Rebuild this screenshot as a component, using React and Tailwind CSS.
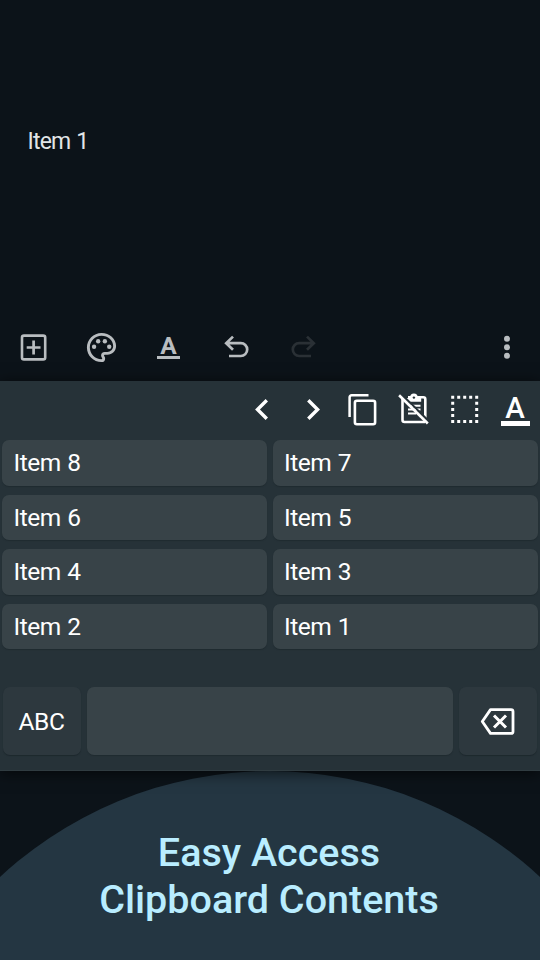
import React from "react";

const clips = ["Item 8", "Item 7", "Item 6", "Item 5", "Item 4", "Item 3", "Item 2", "Item 1"];

function Icon({ w, h, className = "", children }) {
  return (
    <svg width={w} height={h} viewBox={`0 0 ${w} ${h}`} fill="none" stroke="currentColor" className={`shrink-0 ${className}`}>
      {children}
    </svg>
  );
}

function EditorToolbar() {
  return (
    <div className="flex h-[68px] items-center pl-4 pr-4 text-[#b9bdc0]">
      <Icon w={34} h={34}>
        <rect x="6" y="5.6" width="23.2" height="23.8" rx="2" strokeWidth="2.6" />
        <path d="M17.6 10.6v13.8M10.7 17.5h13.8" strokeWidth="2.7" />
      </Icon>
      <svg width="35" height="35" viewBox="0 0 24 24" fill="currentColor" className="ml-[34px] shrink-0">
        <path d="M12 22C6.49 22 2 17.51 2 12S6.49 2 12 2s10 4.04 10 9c0 3.31-2.69 6-6 6h-1.77c-.28 0-.5.22-.5.5 0 .12.05.23.13.33.41.47.64 1.06.64 1.67A2.5 2.5 0 0 1 12 22zm0-18c-4.41 0-8 3.59-8 8s3.59 8 8 8c.28 0 .5-.22.5-.5a.54.54 0 0 0-.14-.35c-.41-.46-.63-1.05-.63-1.65a2.5 2.5 0 0 1 2.5-2.5H16c2.21 0 4-1.79 4-4 0-3.86-3.59-7-8-7z" />
        <circle cx="6.9" cy="11.5" r="1.5" />
        <circle cx="9.7" cy="7.7" r="1.5" />
        <circle cx="14.3" cy="7.7" r="1.5" />
        <circle cx="17.3" cy="11.5" r="1.5" />
      </svg>
      <div className="ml-[38px] flex h-[24px] w-[23px] flex-col items-center justify-between">
        <span className="h-[18px] text-[24.5px] font-bold leading-[22px]">A</span>
        <span className="h-[3px] w-full bg-current" />
      </div>
      <Icon w={34} h={34} className="ml-[39px]">
        <path d="M14 6.6 7.2 13.2 14 19.8M7.5 13.2h14.3a6.4 6.4 0 0 1 0 12.8H10" strokeWidth="2.7" />
      </Icon>
      <Icon w={34} h={34} className="ml-[34px] text-[#2a3035]">
        <path d="M20 6.6 26.8 13.2 20 19.8M26.5 13.2H12.2a6.4 6.4 0 0 0 0 12.8H24" strokeWidth="2.7" />
      </Icon>
      <svg width="8" height="26" viewBox="0 0 8 26" fill="currentColor" className="ml-auto mr-[13.5px]">
        <circle cx="4" cy="4.8" r="3" />
        <circle cx="4" cy="13.3" r="3" />
        <circle cx="4" cy="21.8" r="3" />
      </svg>
    </div>
  );
}

function ClipboardToolbar() {
  return (
    <div className="flex h-[56px] items-center justify-end pr-[10.5px] text-white">
      <Icon w={34} h={34} className="mr-[17px]">
        <path d="M22.8 8.2 13.5 17.5l9.3 9.3" strokeWidth="3.4" />
      </Icon>
      <Icon w={34} h={34} className="mr-[16px]">
        <path d="M13.3 8.2 22.6 17.5l-9.3 9.3" strokeWidth="3.4" />
      </Icon>
      <Icon w={34} h={34} className="mr-[17px]">
        <path d="M4.6 25V5.2a2 2 0 0 1 2-2H23.5" strokeWidth="2.5" />
        <rect x="9.9" y="8.8" width="20.2" height="23.4" rx="2" strokeWidth="2.6" />
      </Icon>
      <Icon w={34} h={34} className="mr-[17.5px]">
        <path d="M6.5 6.5V28a2 2 0 0 0 2 2H29M12 5.3h15.3a2 2 0 0 1 2 2V26" strokeWidth="2.6" />
        <path d="M10.5 6h14.7v3.8H12z" fill="currentColor" stroke="none" />
        <path d="M14 13.7h10.5M12 17.6h12.5M12 21.5h8" strokeWidth="2" />
        <circle cx="17.9" cy="5.2" r="3.7" fill="currentColor" stroke="none" />
        <circle cx="17.9" cy="5.6" r="1.2" fill="#263238" stroke="none" />
        <path d="M5.3 2 33.3 29.5" stroke="#263238" strokeWidth="1.8" />
        <path d="M3.1 3.2 31.8 31.5" strokeWidth="2.6" />
      </Icon>
      <Icon w={34} h={34} className="mr-[19px]">
        <path d="M3.2 5.3h27M3.2 29.5h27" strokeWidth="3" strokeDasharray="3 3" />
        <path d="M4.7 9.8v18M28.7 9.8v18" strokeWidth="3" strokeDasharray="3 3.1" />
      </Icon>
      <div className="mt-[2px] flex h-[32px] w-[29px] flex-col items-center justify-between">
        <span className="h-[22px] text-[29.5px] font-medium leading-[28px]">A</span>
        <span className="h-[5.5px] w-full bg-white" />
      </div>
    </div>
  );
}

export default function App() {
  return (
    <main className="flex h-[960px] w-[540px] flex-col overflow-hidden bg-[#0c1319] font-['Roboto','Liberation_Sans',sans-serif]">
      <header className="flex h-[381px] shrink-0 flex-col justify-between">
        <p className="pl-[27.5px] pt-[128px] text-[23px] leading-7 tracking-[-0.8px] [word-spacing:1px] text-[#e2e5e7]">Item 1</p>
        <EditorToolbar />
      </header>

      <section className="relative z-10 flex h-[390px] shrink-0 flex-col border-b border-[#303c41] bg-[#263238] shadow-[0_2px_14px_rgba(0,0,0,0.65)]">
        <ClipboardToolbar />
        <div className="mt-[3px] grid grid-cols-2 gap-x-[5.5px] gap-y-[9px] pl-[2px] pr-[2.5px]">
          {clips.map((clip) => (
            <button key={clip} className="flex h-[45.5px] items-center rounded-[7px] bg-[#384348] pl-[11.5px] pt-[1px] text-left text-[24.5px] leading-none tracking-[-0.5px] [word-spacing:1px] text-white shadow-[0_1px_1px_#202b30]">
              {clip}
            </button>
          ))}
        </div>
        <div className="mt-[38px] flex h-[68px] gap-[6px] pl-[2.5px] pr-[3.5px]">
          <button className="flex w-[78px] items-center justify-center rounded-[7px] bg-[#2d383e] pt-[2px] text-[24.5px] tracking-[-0.4px] text-white shadow-[0_1px_1px_#1d282d]">ABC</button>
          <button aria-label="Space" className="flex-1 rounded-[7px] bg-[#384348] shadow-[0_1px_1px_#202b30]" />
          <button aria-label="Backspace" className="flex w-[78px] items-center justify-center rounded-[7px] bg-[#2d383e] text-white shadow-[0_1px_1px_#1d282d]">
            <Icon w={36} h={30}>
              <path d="M10.5 3.6h20.5a2 2 0 0 1 2 2v19.8a2 2 0 0 1-2 2H10.5L2.3 15.5z" strokeWidth="2.8" strokeLinejoin="round" />
              <path d="m14 9.5 12 12M26 9.5l-12 12" strokeWidth="3" />
            </Icon>
          </button>
        </div>
      </section>

      <footer className="grid h-[189px] shrink-0 overflow-hidden">
        <svg width="540" height="189" viewBox="0 0 540 189" className="col-start-1 row-start-1">
          <circle cx="270" cy="397" r="397" fill="#243642" />
        </svg>
        <h1 className="col-start-1 row-start-1 pr-[2px] pt-[58px] text-center text-[39.5px] font-medium leading-[47px] text-[#b9edff]">
          Easy Access
          <br />
          Clipboard Contents
        </h1>
      </footer>
    </main>
  );
}
